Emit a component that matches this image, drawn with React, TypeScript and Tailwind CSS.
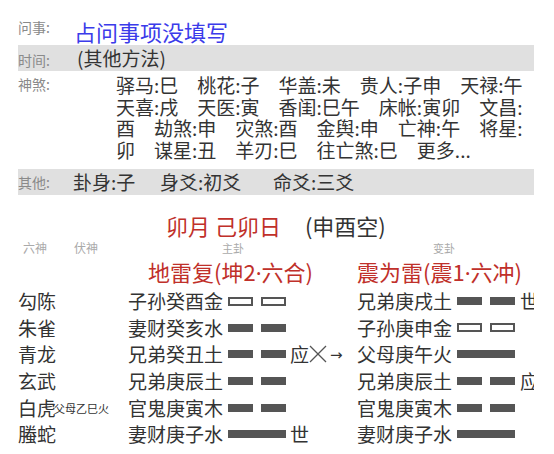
import React from "react";

const F = { fontFamily: '"Noto Sans CJK SC", "Noto Sans", sans-serif' };
const DOT = { fontFamily: '"Noto Sans", "DejaVu Sans", sans-serif' };

type Seg = "yin" | "yang" | "hollow";

function Yao({ t }: { t: Seg }) {
  if (t === "yang") return <div className="h-[8px] w-[58px] shrink-0 bg-[#555]" />;
  if (t === "yin")
    return (
      <div className="flex w-[58px] shrink-0 justify-between">
        <div className="h-[8px] w-[25px] bg-[#555]" />
        <div className="h-[8px] w-[25px] bg-[#555]" />
      </div>
    );
  return (
    <div className="flex w-[58px] shrink-0 justify-between">
      <div className="h-[9px] w-[25px] border-2 border-[#555] bg-white" />
      <div className="h-[9px] w-[25px] border-2 border-[#555] bg-white" />
    </div>
  );
}

const rows: {
  god: string;
  fu?: string;
  main: string;
  mt: Seg;
  ann?: React.ReactNode;
  chg: string;
  ct: Seg;
  cann?: string;
}[] = [
  { god: "勾陈", main: "子孙癸酉金", mt: "hollow", chg: "兄弟庚戌土", ct: "yin", cann: "世" },
  { god: "朱雀", main: "妻财癸亥水", mt: "yin", chg: "子孙庚申金", ct: "hollow" },
  {
    god: "青龙",
    main: "兄弟癸丑土",
    mt: "yin",
    ann: (
      <span className="flex items-center">
        <span>应</span>
        <svg width="18" height="18" viewBox="0 0 18 18" className="shrink-0">
          <line x1="1" y1="1" x2="17" y2="17" stroke="#555" strokeWidth="1.2" />
          <line x1="17" y1="1" x2="1" y2="17" stroke="#555" strokeWidth="1.2" />
        </svg>
        <span className="ml-[3px] text-[15px]" style={DOT}>→</span>
      </span>
    ),
    chg: "父母庚午火",
    ct: "yang",
  },
  { god: "玄武", main: "兄弟庚辰土", mt: "yin", chg: "兄弟庚辰土", ct: "yin", cann: "应" },
  { god: "白虎", fu: "父母乙巳火", main: "官鬼庚寅木", mt: "yin", chg: "官鬼庚寅木", ct: "yin" },
  { god: "螣蛇", main: "妻财庚子水", mt: "yang", ann: "世", chg: "妻财庚子水", ct: "yang" },
];

export default function App() {
  return (
    <div className="h-[454px] w-[554px] bg-white text-[#333]" style={F}>
      <div className="ml-[18px] w-[516px] overflow-hidden whitespace-nowrap pt-[16px]">
        {/* 问事 */}
        <div className="flex h-[29px] items-start">
          <div className="mt-[2px] w-[56px] shrink-0 text-[14px] leading-[18px] text-[#8a8a8a]">问事:</div>
          <div className="mt-[1px] text-[22px] leading-[28px] text-[#3b3bea]">占问事项没填写</div>
        </div>
        {/* 时间 */}
        <div className="flex h-[26px] items-end bg-[#e0e0e0] pb-[1px]">
          <div className="w-[59px] shrink-0 text-[14px] leading-[20px] text-[#8a8a8a]">时间:</div>
          <div className="text-[19px] leading-[24px]">(其他方法)</div>
        </div>
        {/* 神煞 */}
        <div className="flex h-[98px] pt-[3px]">
          <div className="w-[98px] shrink-0 text-[14px] leading-[20px] text-[#8a8a8a]">神煞:</div>
          <div className="whitespace-pre text-[19px] leading-[21.7px]">
            <div>驿马:巳　桃花:子　华盖:未　贵人:子申　天禄:午</div>
            <div>天喜:戌　天医:寅　香闺:巳午　床帐:寅卯　文昌:</div>
            <div>酉　劫煞:申　灾煞:酉　金舆:申　亡神:午　将星:</div>
            <div>卯　谋星:丑　羊刃:巳　往亡煞:巳　更多...</div>
          </div>
        </div>
        {/* 其他 */}
        <div className="flex h-[26px] items-center bg-[#e0e0e0]">
          <div className="w-[55px] shrink-0 text-[14px] leading-[20px] text-[#8a8a8a]">其他:</div>
          <div className="w-[87px] shrink-0 text-[19px] leading-[24px]">卦身:子</div>
          <div className="w-[113px] shrink-0 text-[19px] leading-[24px]">身爻:初爻</div>
          <div className="text-[19px] leading-[24px]">命爻:三爻</div>
        </div>

        {/* 日期 */}
        <div className="mt-[16px] flex h-[28px] items-center pl-[148px]">
          <span className="text-[22px] text-[#c0302a]">卯月 己卯日</span>
          <span className="ml-[24px] text-[22px] text-[#333]">(申酉空)</span>
        </div>

        {/* header */}
        <div className="flex h-[18px] items-center text-[12px] text-[#aaa]">
          <span className="ml-[5px] w-[51px] shrink-0">六神</span>
          <span className="w-[148px] shrink-0">伏神</span>
          <span className="w-[211px] shrink-0 text-[11px]">主卦</span>
          <span className="text-[11px]">变卦</span>
        </div>

        {/* titles */}
        <div className="flex h-[30px] items-center text-[22px] text-[#c0302a]">
          <span className="ml-[130px] w-[209px] shrink-0">
            地雷复(坤2<span style={DOT}>·</span>六合)
          </span>
          <span>
            震为雷(震1<span style={DOT}>·</span>六冲)
          </span>
        </div>

        {/* rows */}
        <div className="mt-[1px]">
          {rows.map((r, i) => (
            <div key={i} className="flex h-[26.6px] items-center text-[19px] leading-[24px]">
              <div className="w-[36px] shrink-0">{r.god}</div>
              <div className="w-[74px] shrink-0 text-[11px]">{r.fu ?? ""}</div>
              <div className="w-[100px] shrink-0">{r.main}</div>
              <Yao t={r.mt} />
              <div className="w-[71px] shrink-0 pl-[4px]">{r.ann ?? ""}</div>
              <div className="w-[100px] shrink-0">{r.chg}</div>
              <Yao t={r.ct} />
              <div className="shrink-0 pl-[5px]">{r.cann ?? ""}</div>
            </div>
          ))}
        </div>
      </div>
    </div>
  );
}
